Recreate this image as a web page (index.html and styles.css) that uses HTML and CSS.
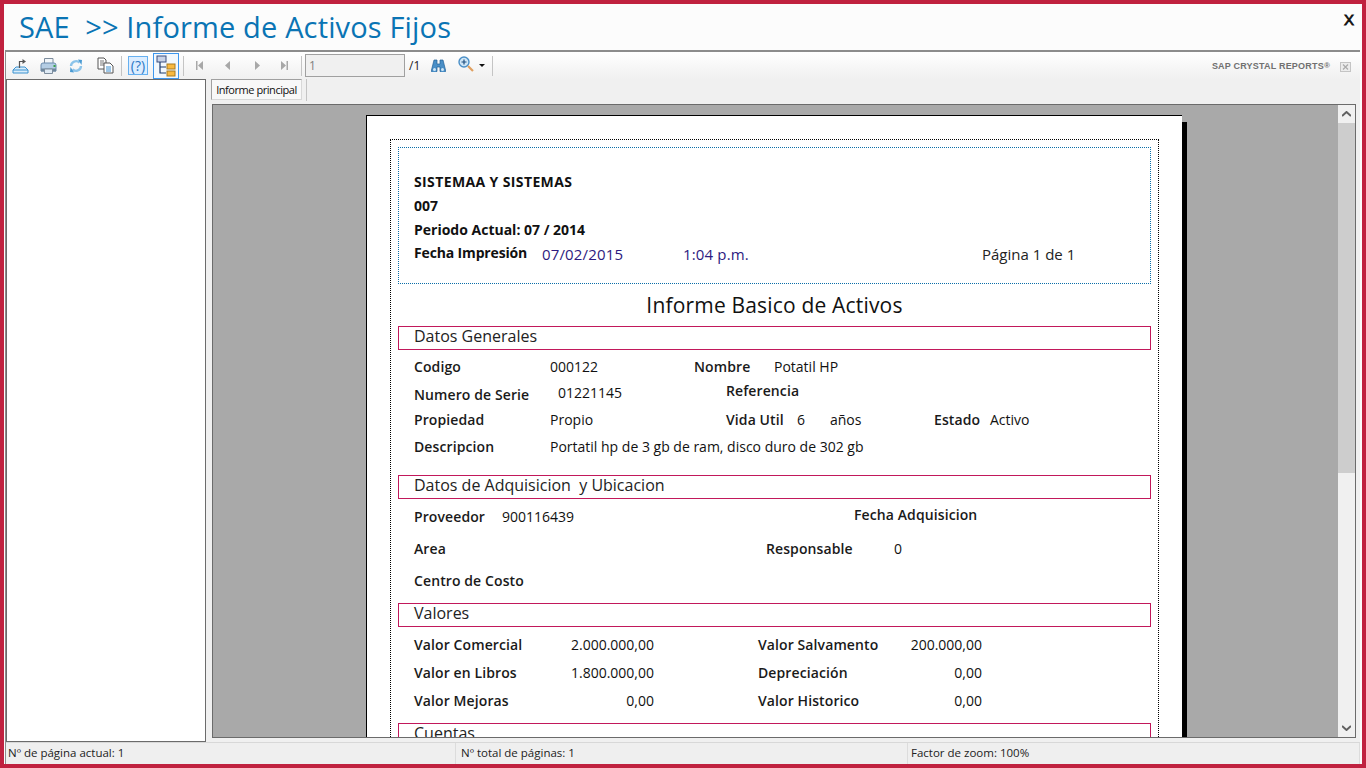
FILE: index.html
```html
<!DOCTYPE html>
<html lang="es">
<head>
<meta charset="utf-8">
<title>SAE &gt;&gt; Informe de Activos Fijos</title>
<link rel="stylesheet" href="styles.css">
</head>
<body>
<div class="window">
  <header class="titlebar">
    <h1 class="title">SAE&nbsp; &gt;&gt; Informe de Activos Fijos</h1>
    <span class="close">X</span>
  </header>
  <div class="content">
    <div class="toolbar">
      <div class="tools">
        <svg class="ic ic-export" viewBox="0 0 17 16"><path d="M1 12 L4 9 H13 L16 12 V15 H1 Z" fill="#d8ecfa" stroke="#3a92d0"/><path d="M1 12 H16" stroke="#3a92d0"/><path d="M7.5 10 V3.5 H11" fill="none" stroke="#555" stroke-width="1.2"/><path d="M10.5 1 L14 3.5 L10.5 6 Z" fill="#555"/></svg>
        <svg class="ic ic-print" viewBox="0 0 17 16"><path d="M4.5 .5 H13 V6 H4.5 Z" fill="#f2f6fa" stroke="#7d8c9c"/><path d="M1 7 Q1 5 3 5 H14 Q16 5 16 7 V13 H1 Z" fill="#b4cde4" stroke="#6a8cae"/><path d="M1 10.5 H16 V13.5 H1 Z" fill="#6f879d"/><path d="M4.5 11 H12.5 V15.5 H4.5 Z" fill="#dfeaf4" stroke="#7d8c9c"/><path d="M13.5 8 H15.5" stroke="#3aa34a" stroke-width="2"/></svg>
        <svg class="ic ic-refresh" viewBox="0 0 14 14"><path d="M2 7 A5 5 0 0 1 10.5 3.6" fill="none" stroke="#8cc4ea" stroke-width="2.4"/><path d="M9 .5 L13 1 L12.5 6 Z" fill="#4a9ad2"/><path d="M12 7 A5 5 0 0 1 3.5 10.4" fill="none" stroke="#8cc4ea" stroke-width="2.4"/><path d="M5 13.5 L1 13 L1.5 8 Z" fill="#4a9ad2"/></svg>
        <svg class="ic ic-copy" viewBox="0 0 17 17"><path d="M1 1 H7 L9 3 V12 H1 Z" fill="#fff" stroke="#555"/><path d="M3 4 H7 M3 6 H7 M3 8 H7" stroke="#777"/><path d="M7 6 H13 L16 9 V16 H7 Z" fill="#fff" stroke="#555"/><path d="M9 10 H14 M9 12 H14 M9 14 H14" stroke="#3d8fd0"/></svg>
        <i class="sep sep-a"></i>
        <span class="help">(?)</span>
        <span class="treebtn">
          <svg class="ic-tree" viewBox="0 0 20 22"><rect x="1" y="1" width="9" height="6" fill="#c9d3e6" stroke="#3a4f80"/><path d="M4 7 V18 H10 M4 12 H10" fill="none" stroke="#1d3a6b" stroke-width="1.2"/><rect x="11" y="9" width="8" height="5" fill="#f9b93f" stroke="#a87a20"/><rect x="11" y="16" width="8" height="5" fill="#f9b93f" stroke="#a87a20"/></svg>
        </span>
        <i class="sep sep-b"></i>
        <svg class="nav nav-first" viewBox="0 0 7 9"><path d="M0 0 H1.5 V9 H0 Z M7 0 V9 L2 4.5 Z" fill="#a8a8a8"/></svg>
        <svg class="nav nav-prev" viewBox="0 0 7 9"><path d="M6 0 V9 L1 4.5 Z" fill="#a8a8a8"/></svg>
        <svg class="nav nav-next" viewBox="0 0 7 9"><path d="M1 0 V9 L6 4.5 Z" fill="#a8a8a8"/></svg>
        <svg class="nav nav-last" viewBox="0 0 7 9"><path d="M0 0 V9 L5 4.5 Z M5.5 0 H7 V9 H5.5 Z" fill="#a8a8a8"/></svg>
        <i class="sep sep-c"></i>
        <span class="pageinput">1</span>
        <span class="pagecount">/1</span>
        <svg class="ic ic-find" viewBox="0 0 15 13"><path d="M3 1 H6 V5 H9 V1 H12 L14.5 11 A2 2 0 0 1 9 12 V8 H6 V12 A2 2 0 0 1 0.5 11 Z" fill="#4a8fc7" stroke="#1f5f96" stroke-width=".7"/><circle cx="3.5" cy="10.5" r="1.5" fill="#cfe6f7"/><circle cx="11.5" cy="10.5" r="1.5" fill="#cfe6f7"/></svg>
        <svg class="ic ic-zoom" viewBox="0 0 16 16"><circle cx="6" cy="6" r="5" fill="#cfe6f7" stroke="#4a8fc7" stroke-width="1.4"/><path d="M3.5 6 H8.5 M6 3.5 V8.5" stroke="#1d4f80" stroke-width="1.2"/><path d="M10 10 L15 15" stroke="#e0a060" stroke-width="2.2"/></svg>
        <i class="caret"></i>
        <i class="sep sep-d"></i>
      </div>
      <div class="brand">
        <span class="brandname">SAP CRYSTAL REPORTS<sup class="reg">®</sup></span>
        <svg class="brandx" viewBox="0 0 11 10"><rect x=".5" y=".5" width="10" height="9" fill="#ececec" stroke="#c4c4c4"/><path d="M3 2.5 L8 7.5 M8 2.5 L3 7.5" stroke="#aaa" stroke-width="1.2"/></svg>
      </div>
    </div>
    <div class="workspace">
      <aside class="tree"></aside>
      <main class="main">
        <div class="tabstrip">
          <span class="tab">Informe principal</span>
          <i class="tabsep"></i>
        </div>
        <div class="viewer">
          <div class="canvas">
            <div class="page">
              <div class="outer">
                <section class="head">
                  <p class="hl hl-caps">SISTEMAA Y SISTEMAS</p>
                  <p class="hl">007</p>
                  <p class="hl">Periodo Actual: 07 / 2014</p>
                  <div class="hl hrow">
                    <span class="w128 up">Fecha Impresión</span>
                    <span class="date w141">07/02/2015</span>
                    <span class="date w299">1:04 p.m.</span>
                    <span class="pagenum">Página 1 de 1</span>
                  </div>
                </section>
                <h2 class="rtitle">Informe Basico de Activos</h2>
                <h3 class="band">Datos Generales</h3>
                <div class="rows rows-a">
                  <div class="row r27"><span class="lb w136">Codigo</span><span class="w144">000122</span><span class="lb w80">Nombre</span><span>Potatil HP</span></div>
                  <div class="row r26"><span class="lb w144 dn">Numero de Serie</span><span class="w168">01221145</span><span class="lb up2">Referencia</span></div>
                  <div class="row r27"><span class="lb w136">Propiedad</span><span class="w176">Propio</span><span class="lb w71">Vida Util</span><span class="w33">6</span><span class="w104">años</span><span class="lb w56">Estado</span><span>Activo</span></div>
                  <div class="row r27"><span class="lb w136">Descripcion</span><span>Portatil hp de 3 gb de ram, disco duro de 302 gb</span></div>
                </div>
                <h3 class="band">Datos de Adquisicion&nbsp; y Ubicacion</h3>
                <div class="rows rows-b">
                  <div class="row r32"><span class="lb w88">Proveedor</span><span class="w352">900116439</span><span class="lb up2">Fecha Adquisicion</span></div>
                  <div class="row r32"><span class="lb w352">Area</span><span class="lb w128">Responsable</span><span>0</span></div>
                  <div class="row r32"><span class="lb">Centro de Costo</span></div>
                </div>
                <h3 class="band">Valores</h3>
                <div class="rows rows-c">
                  <div class="vrow r28"><span class="lb">Valor Comercial</span><span class="val">2.000.000,00</span><span class="lb">Valor Salvamento</span><span class="val">200.000,00</span></div>
                  <div class="vrow r28"><span class="lb">Valor en Libros</span><span class="val">1.800.000,00</span><span class="lb">Depreciación</span><span class="val">0,00</span></div>
                  <div class="vrow r28"><span class="lb">Valor Mejoras</span><span class="val">0,00</span><span class="lb">Valor Historico</span><span class="val">0,00</span></div>
                </div>
                <h3 class="band band-d">Cuentas</h3>
              </div>
            </div>
          </div>
          <div class="scrollbar">
            <svg class="arrow" viewBox="0 0 9 6"><path d="M0 5 L4.5 1 L9 5" fill="none" stroke="#606060" stroke-width="2"/></svg>
            <div class="track"><div class="thumb"></div></div>
            <svg class="arrow" viewBox="0 0 9 6"><path d="M0 1 L4.5 5 L9 1" fill="none" stroke="#606060" stroke-width="2"/></svg>
          </div>
        </div>
      </main>
    </div>
    <footer class="status">
      <span class="st st-a">Nº de página actual: 1</span>
      <span class="st st-b">Nº total de páginas: 1</span>
      <span class="st st-c">Factor de zoom: 100%</span>
    </footer>
  </div>
</div>
</body>
</html>
```

FILE: styles.css
```css
* { box-sizing: border-box; }
html, body { margin: 0; padding: 0; height: 100%; overflow: hidden; }
body { background: #c0213f; padding: 4px; font-family: "Open Sans", "Noto Sans", sans-serif; color: #111; }
p, h1, h2, h3 { margin: 0; font-weight: 400; }
i { display: block; }

.window { width: 1358px; height: 760px; background: #fcfcfc; display: flex; flex-direction: column; }

.titlebar { height: 46px; flex: none; display: flex; justify-content: space-between; padding-left: 15px; background: #fcfcfc; }
.title { font-size: 29px; line-height: 46px; letter-spacing: .15px; color: #0a74b4; white-space: nowrap; }
.close { font: 400 15px/1 "Liberation Sans", sans-serif; -webkit-text-stroke: .8px #111; color: #111; margin: 8px 8px 0 0; }

.content { flex: 1; margin: 0 2px 0 1px; border-top: 2px solid #8c8c8c; border-left: 1px solid #8c8c8c; display: flex; flex-direction: column; background: #f0f0f0; min-height: 0; }

.toolbar { height: 27px; flex: none; display: flex; justify-content: space-between; background: linear-gradient(#ffffff, #f0f0f0); }
.tools { display: flex; align-items: center; }
.ic { display: block; flex: none; }
.ic-export { width: 17px; height: 16px; margin-left: 6px; }
.ic-print { width: 17px; height: 16px; margin-left: 11px; }
.ic-refresh { width: 14px; height: 14px; margin-left: 12px; }
.ic-copy { width: 17px; height: 17px; margin-left: 14px; }
.sep { width: 1px; height: 20px; background: #c4c4c4; flex: none; }
.sep-a { margin-left: 7px; }
.help { width: 20px; height: 19px; margin-left: 6px; border: 1px solid #66b0f0; background: #dcedff; color: #2c78c4; font-size: 14px; line-height: 17px; text-align: center; flex: none; }
.treebtn { width: 26px; height: 26px; margin-left: 5px; border: 1px solid #3d97ee; background: #f2f8fd; display: flex; align-items: center; justify-content: center; flex: none; }
.ic-tree { width: 20px; height: 22px; display: block; }
.sep-b { margin-left: 4px; }
.nav { width: 7px; height: 9px; display: block; flex: none; }
.nav-first { margin-left: 12px; }
.nav-prev { margin-left: 21px; }
.nav-next { margin-left: 23px; }
.nav-last { margin-left: 20px; }
.sep-c { margin-left: 13px; }
.pageinput { width: 100px; height: 23px; margin-left: 3px; border: 1px solid #a0a0a0; background: #f0f0f0; color: #808080; font: 12px/21px "Open Sans", sans-serif; padding-left: 3px; flex: none; }
.pagecount { margin-left: 4px; width: 22px; font-size: 12px; color: #222; flex: none; }
.ic-find { width: 15px; height: 13px; }
.ic-zoom { width: 16px; height: 16px; margin: -3px 0 0 12px; }
.caret { margin-left: 5px; border: 3px solid transparent; border-top: 3px solid #111; border-bottom: 0; width: 0; height: 0; flex: none; }
.sep-d { margin-left: 7px; }

.brand { display: flex; align-items: center; padding: 2px 9px 0 0; }
.brandname { font: 700 9px/1 "Liberation Sans", sans-serif; color: #707070; letter-spacing: .2px; white-space: nowrap; }
.reg { font-size: 8px; line-height: 0; vertical-align: 1px; }
.brandx { width: 11px; height: 10px; margin-left: 10px; display: block; }

.workspace { flex: 1; display: flex; min-height: 0; padding-right: 4px; }
.tree { width: 200px; flex: none; height: 663px; border: 1px solid #6b6b6b; background: #fff; }
.main { flex: 1; min-width: 0; display: flex; flex-direction: column; margin-left: 6px; }
.tabstrip { height: 25px; flex: none; display: flex; align-items: flex-start; margin-left: -1px; }
.tab { width: 91px; height: 21px; border: 1px solid #d8d8d8; border-top-color: #a0a0a0; border-left-color: #a0a0a0; background: #f8f8f8; font-size: 11px; line-height: 19px; text-align: center; letter-spacing: -.45px; color: #111; white-space: nowrap; }
.tabsep { width: 1px; height: 22px; margin-left: 4px; background: #c4c4c4; }
.viewer { height: 634px; flex: none; border: 1px solid #6b6b6b; display: flex; background: #a9a9a9; }
.canvas { flex: 1; min-width: 0; overflow: hidden; padding: 10px 0 0 153px; }
.scrollbar { width: 17px; flex: none; background: #f0f0f0; display: flex; flex-direction: column; align-items: center; }
.arrow { width: 9px; height: 6px; display: block; margin: 6px 0; flex: none; }
.track { flex: 1; width: 100%; }
.thumb { height: 350px; background: #cdcdcd; }

.page { width: 816px; height: 900px; background: #fff; border-top: 1px solid #000; border-left: 1px solid #000; box-shadow: 5px 7px 0 #000; padding: 23px 23px 0 23px; }
.outer { border: 1px dotted #000; height: 100%; padding: 7px; }

.head { height: 137px; border: 1px dotted #0a6ea8; padding: 22px 15px 0; }
.hl { font-size: 14px; font-weight: 700; line-height: 24px; white-space: nowrap; }
.hl-caps { letter-spacing: .38px; }
.hrow { display: flex; font-weight: 400; }
.up { font-weight: 700; letter-spacing: -.15px; position: relative; top: -1px; }
.w128 { width: 128px; }
.w141 { width: 141px; }
.w299 { width: 299px; }
.date { color: #2d1a80; font-size: 15px; letter-spacing: .15px; }
.pagenum { color: #222; font-size: 15px; }

.rtitle { font-size: 21px; line-height: 42px; text-align: center; color: #111; letter-spacing: .18px; }
.band { height: 24px; border: 1px solid #c2185b; padding-left: 15px; font-size: 16px; line-height: 18px; color: #222; white-space: nowrap; }
.band-d { height: 30px; }

.rows { padding-left: 16px; font-size: 14px; }
.rows-a { height: 125px; padding-top: 3px; }
.rows-b { height: 104px; padding-top: 2px; }
.rows-c { height: 96px; padding-top: 4px; }
.row { display: flex; white-space: nowrap; }
.r26 { height: 26px; line-height: 26px; }
.r27 { height: 27px; line-height: 27px; }
.r28 { height: 28px; line-height: 28px; }
.r32 { height: 32px; line-height: 32px; }
.lb { font-weight: 600; letter-spacing: .1px; color: #1a1a1a; }
.dn { position: relative; top: 2px; }
.up2 { position: relative; top: -2px; }
.w33 { width: 33px; }
.w56 { width: 56px; }
.w71 { width: 71px; }
.w80 { width: 80px; }
.w88 { width: 88px; }
.w104 { width: 104px; }
.w136 { width: 136px; }
.w144 { width: 144px; }
.w168 { width: 168px; }
.w176 { width: 176px; }
.w352 { width: 352px; }
.vrow { display: grid; grid-template-columns: 130px 110px 104px 124px 100px; white-space: nowrap; }
.vrow .lb:nth-child(3) { grid-column: 4; }
.val { text-align: right; }

.status { height: 22px; flex: none; margin-top: 3px; border-top: 1px solid #d8d8d8; display: flex; font-size: 11.5px; line-height: 20px; color: #222; background: #efefef; }
.st { display: block; white-space: nowrap; padding-left: 2px; border-right: 1px solid #dcdcdc; }
.st-a { width: 450px; }
.st-b { width: 452px; padding-left: 5px; }
.st-c { flex: 1; padding-left: 3px; }
```
